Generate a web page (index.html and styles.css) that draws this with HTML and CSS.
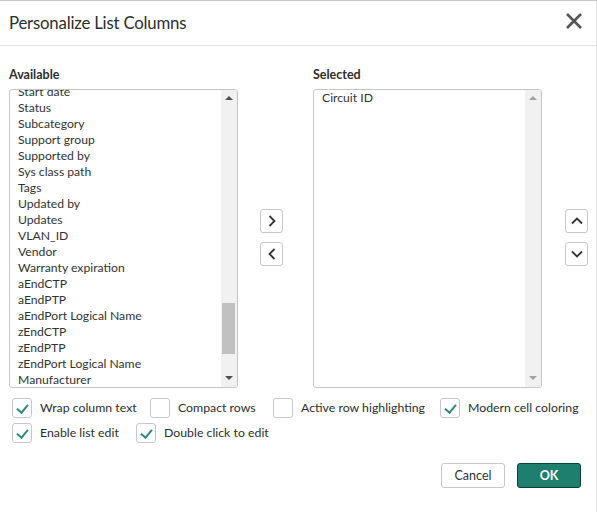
FILE: index.html
```html
<!DOCTYPE html>
<html>
<head>
<meta charset="utf-8">
<link rel="stylesheet" href="styles.css">
</head>
<body>
<div class="modal">
  <div class="header">
    <h1 class="title">Personalize List Columns</h1>
    <button class="close" aria-label="Close">
      <svg width="18" height="18" viewBox="0 0 18 18"><path d="M2 2 L16 16 M16 2 L2 16" stroke="#555" stroke-width="2.6" fill="none"/></svg>
    </button>
  </div>
  <div class="body">
    <div class="columns">
      <div class="col">
        <div class="label">Available</div>
        <div class="listbox">
          <div class="items scrolled">
            <div class="item">Start date</div>
            <div class="item">Status</div>
            <div class="item">Subcategory</div>
            <div class="item">Support group</div>
            <div class="item">Supported by</div>
            <div class="item">Sys class path</div>
            <div class="item">Tags</div>
            <div class="item">Updated by</div>
            <div class="item">Updates</div>
            <div class="item">VLAN_ID</div>
            <div class="item">Vendor</div>
            <div class="item">Warranty expiration</div>
            <div class="item">aEndCTP</div>
            <div class="item">aEndPTP</div>
            <div class="item">aEndPort Logical Name</div>
            <div class="item">zEndCTP</div>
            <div class="item">zEndPTP</div>
            <div class="item">zEndPort Logical Name</div>
            <div class="item">Manufacturer</div>
          </div>
          <div class="scrollbar">
            <span class="arrow up dark"></span>
            <span class="track"><span class="thumb"></span></span>
            <span class="arrow down dark"></span>
          </div>
        </div>
      </div>
      <div class="mid">
        <button class="sq"><svg width="12" height="14" viewBox="0 0 12 14"><path d="M3.5 2 L8.5 7 L3.5 12" stroke="#333" stroke-width="1.8" fill="none"/></svg></button>
        <button class="sq"><svg width="12" height="14" viewBox="0 0 12 14"><path d="M8.5 2 L3.5 7 L8.5 12" stroke="#333" stroke-width="1.8" fill="none"/></svg></button>
      </div>
      <div class="col">
        <div class="label">Selected</div>
        <div class="listbox">
          <div class="items">
            <div class="item">Circuit ID</div>
          </div>
          <div class="scrollbar">
            <span class="arrow up light"></span>
            <span class="track"></span>
            <span class="arrow down light"></span>
          </div>
        </div>
      </div>
      <div class="right">
        <button class="sq"><svg width="14" height="12" viewBox="0 0 14 12"><path d="M2 8.5 L7 3.5 L12 8.5" stroke="#333" stroke-width="1.8" fill="none"/></svg></button>
        <button class="sq"><svg width="14" height="12" viewBox="0 0 14 12"><path d="M2 3.5 L7 8.5 L12 3.5" stroke="#333" stroke-width="1.8" fill="none"/></svg></button>
      </div>
    </div>
    <div class="options">
      <div class="optrow">
        <label class="opt w1"><span class="cb on"></span>Wrap column text</label>
        <label class="opt w2"><span class="cb"></span>Compact rows</label>
        <label class="opt w3"><span class="cb"></span>Active row highlighting</label>
        <label class="opt"><span class="cb on"></span>Modern cell coloring</label>
      </div>
      <div class="optrow">
        <label class="opt w4"><span class="cb on"></span>Enable list edit</label>
        <label class="opt"><span class="cb on"></span>Double click to edit</label>
      </div>
    </div>
    <div class="footer">
      <button class="btn cancel">Cancel</button>
      <button class="btn ok">OK</button>
    </div>
  </div>
</div>
</body>
</html>
```
FILE: styles.css
```css
* { box-sizing: border-box; }
html, body { margin: 0; padding: 0; background: #fff; }
body {
  font-family: Lato, "Liberation Sans", sans-serif;
  color: #2e2e2e;
  width: 597px;
  height: 512px;
  overflow: hidden;
}
.modal {
  border-top: 1px solid #c8c8c8;
  border-right: 1px solid #e4e4e4;
  height: 512px;
}
.header {
  height: 45px;
  border-bottom: 1px solid #e2e2e2;
  display: flex;
  align-items: center;
  justify-content: space-between;
  padding: 0 12px 0 9px;
}
.title {
  margin: 0;
  font-size: 16.8px;
  font-weight: 400;
  color: #2e2e2e;
  letter-spacing: -0.2px;
  padding-bottom: 2px;
}
.close {
  border: 0;
  background: none;
  padding: 0;
  width: 20px;
  height: 20px;
  display: flex;
  align-items: center;
  justify-content: center;
  margin-bottom: 4px;
}
.body { padding: 19px 0 0 9px; }
.columns { display: flex; }
.col { width: 229px; display: flex; flex-direction: column; }
.label {
  font-size: 12.5px;
  font-weight: 700;
  height: 24px;
  line-height: 20px;
  color: #2e2e2e;
}
.listbox {
  height: 299px;
  border: 1px solid #c6c6c6;
  border-radius: 3px;
  display: flex;
  overflow: hidden;
}
.items { flex: 1; padding: 0 0 0 8px; overflow: hidden; }
.items.scrolled .item:first-child { margin-top: -6px; }
.item {
  font-size: 12.2px;
  line-height: 16px;
  height: 16px;
  white-space: nowrap;
  color: #333;
}
.scrollbar {
  width: 16px;
  background: #f1f1f1;
  display: flex;
  flex-direction: column;
  align-items: center;
}
.arrow { width: 0; height: 0; border-left: 4px solid transparent; border-right: 4px solid transparent; }
.arrow.up { border-bottom: 4px solid #505050; margin: 6px 0 5px; }
.arrow.down { border-top: 4px solid #505050; margin: 5px 0 7px; }
.arrow.light.up { border-bottom-color: #a3a3a3; }
.arrow.light.down { border-top-color: #a3a3a3; }
.track { flex: 1; width: 100%; display: flex; flex-direction: column; justify-content: flex-end; padding-bottom: 17px; }
.thumb { width: 13px; height: 51px; background: #c1c1c1; margin-left: 1px; }
.mid {
  width: 75px;
  display: flex;
  flex-direction: column;
  align-items: flex-start;
  padding: 144px 0 0 22px;
  gap: 9px;
}
.right {
  width: 45px;
  display: flex;
  flex-direction: column;
  padding: 144px 0 0 23px;
  gap: 9px;
}
.sq {
  width: 23px;
  height: 24px;
  border: 1px solid #c8c8c8;
  border-radius: 3px;
  background: #fff;
  padding: 0;
  display: flex;
  align-items: center;
  justify-content: center;
}
.options { padding: 10px 0 0 3px; display: flex; flex-direction: column; gap: 6px; }
.optrow { display: flex; align-items: center; height: 19px; }
.opt { display: flex; align-items: center; font-size: 12.3px; color: #2e2e2e; white-space: nowrap; }
.w1 { width: 138px; }
.w2 { width: 123px; }
.w3 { width: 167px; }
.w4 { width: 124px; }
.cb {
  width: 20px;
  height: 20px;
  border: 1px solid #c8c8c8;
  border-radius: 3px;
  margin-right: 8px;
  flex: none;
  position: relative;
}
.cb.on::after {
  content: "";
  position: absolute;
  left: 6px;
  top: 3px;
  width: 5px;
  height: 9px;
  border-right: 2px solid #2a8a78;
  border-bottom: 2px solid #2a8a78;
  transform: rotate(40deg);
}
.footer { display: flex; justify-content: flex-end; gap: 12px; padding: 21px 15px 0 0; }
.btn {
  width: 64px;
  height: 25px;
  border-radius: 3px;
  font-family: Lato, "Liberation Sans", sans-serif;
  font-size: 12.5px;
  padding: 0;
}
.cancel { background: #fff; border: 1px solid #c8c8c8; color: #333; }
.ok { background: #1f7f6f; border: 1px solid #0d3f37; color: #fff; font-weight: 700; }
```
